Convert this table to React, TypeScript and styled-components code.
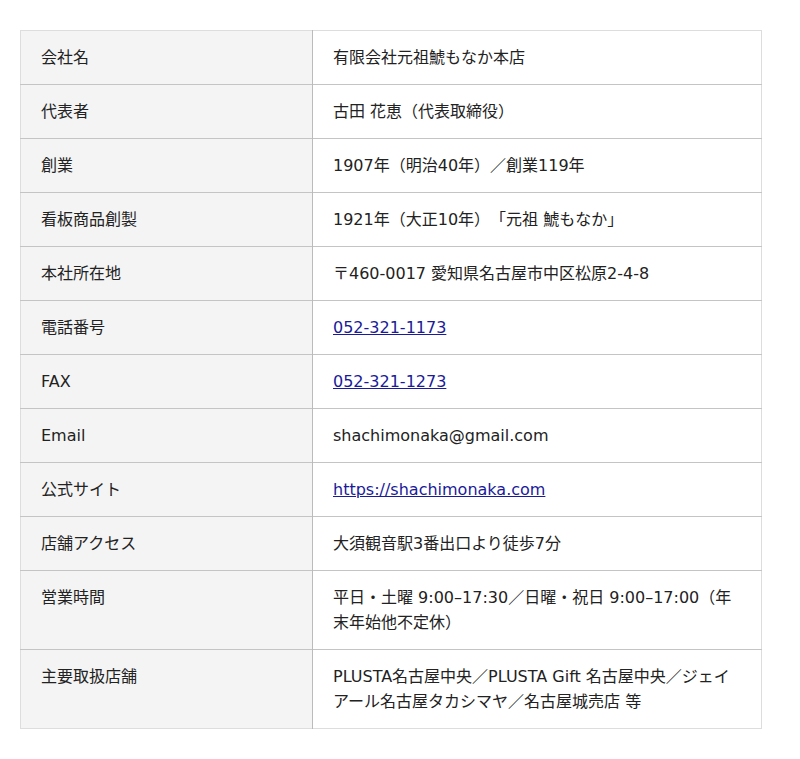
import React from 'react';
import styled, { createGlobalStyle } from 'styled-components';

const GlobalStyle = createGlobalStyle`
  body {
    margin: 0;
    background: #fff;
    font-family: "DejaVu Sans", "Noto Sans CJK JP", sans-serif;
    color: #222;
  }
`;

const Wrapper = styled.div`
  width: 742px;
  padding: 30px 20px;
`;

const Table = styled.table`
  width: 100%;
  border-collapse: collapse;
  border: 1px solid #ddd;
  font-size: 16px;
  line-height: 25px;
  text-spacing-trim: space-all;
`;

const Row = styled.tr`
  border-bottom: 1px solid #c4c4c4;

  &:last-child {
    border-bottom: 1px solid #ddd;
  }
`;

const Label = styled.th`
  width: 251px;
  padding: 14px 20px;
  background: #f4f4f4;
  border-right: 1px solid #bbb;
  text-align: left;
  font-weight: normal;
  vertical-align: top;
`;

const Value = styled.td`
  padding: 14px 20px;
  vertical-align: top;
`;

const TextLink = styled.a`
  color: #1a1a9a;
  text-decoration: underline;
`;

type Item = { label: string; value: React.ReactNode };

const items: Item[] = [
  { label: '会社名', value: '有限会社元祖鯱もなか本店' },
  { label: '代表者', value: '古田 花恵（代表取締役）' },
  { label: '創業', value: '1907年（明治40年）／創業119年' },
  { label: '看板商品創製', value: '1921年（大正10年）「元祖 鯱もなか」' },
  { label: '本社所在地', value: '〒460-0017 愛知県名古屋市中区松原2-4-8' },
  { label: '電話番号', value: <TextLink href="#">052-321-1173</TextLink> },
  { label: 'FAX', value: <TextLink href="#">052-321-1273</TextLink> },
  { label: 'Email', value: 'shachimonaka@gmail.com' },
  { label: '公式サイト', value: <TextLink href="#">https://shachimonaka.com</TextLink> },
  { label: '店舗アクセス', value: '大須観音駅3番出口より徒歩7分' },
  { label: '営業時間', value: '平日・土曜 9:00–17:30／日曜・祝日 9:00–17:00（年末年始他不定休）' },
  {
    label: '主要取扱店舗',
    value: 'PLUSTA名古屋中央／PLUSTA Gift 名古屋中央／ジェイアール名古屋タカシマヤ／名古屋城売店 等',
  },
];

const App: React.FC = () => {
  return (
    <>
      <GlobalStyle />
      <Wrapper>
        <Table>
          <tbody>
            {items.map((item) => (
              <Row key={item.label}>
                <Label>{item.label}</Label>
                <Value>{item.value}</Value>
              </Row>
            ))}
          </tbody>
        </Table>
      </Wrapper>
    </>
  );
};

export default App;
